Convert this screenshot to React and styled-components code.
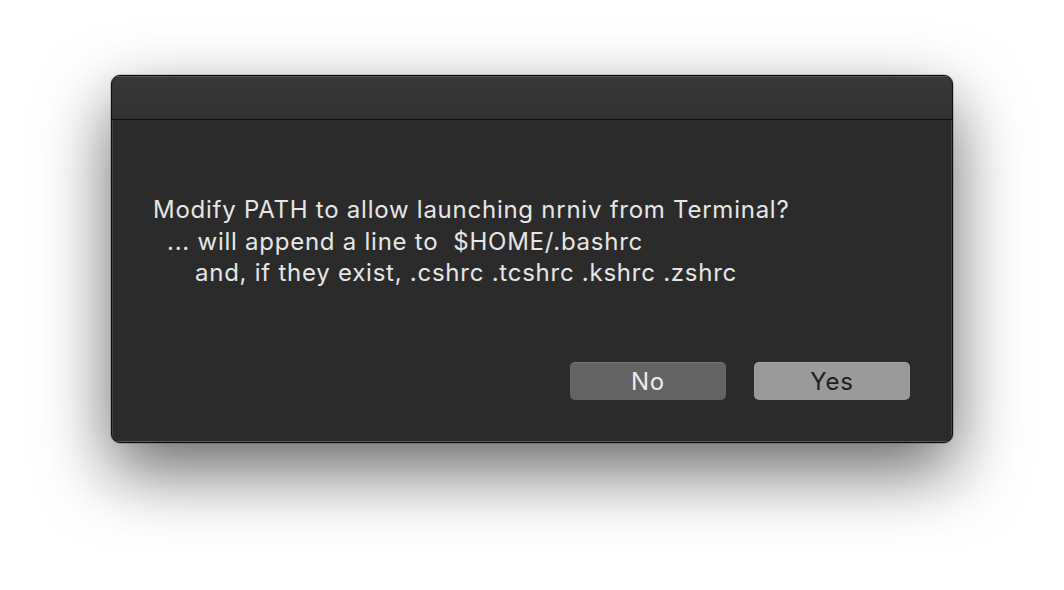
import React from "react";
import styled, { createGlobalStyle } from "styled-components";

const GlobalStyle = createGlobalStyle`
  html, body {
    margin: 0;
    padding: 0;
    background: #ffffff;
  }
  body {
    font-family: Inter, "Liberation Sans", Arial, sans-serif;
  }
`;

const Stage = styled.div`
  width: 1064px;
  height: 590px;
  display: flex;
  justify-content: center;
  align-items: flex-start;
  padding-top: 75px;
  box-sizing: border-box;
  overflow: hidden;
  background: #ffffff;
`;

const Window = styled.div`
  width: 842px;
  height: 368px;
  box-sizing: border-box;
  display: flex;
  flex-direction: column;
  border: 1px solid #0c0c0c;
  border-radius: 9px;
  overflow: hidden;
  background: #2b2b2b;
  box-shadow: 0 28px 70px rgba(0, 0, 0, 0.6), 0 0 0 1px rgba(0, 0, 0, 0.15);
`;

const TitleBar = styled.div`
  height: 43px;
  flex: none;
  background: linear-gradient(#383838, #323232);
  border-bottom: 1px solid #101010;
  box-shadow: inset 0 1px 0 rgba(255, 255, 255, 0.16);
`;

const Body = styled.div`
  flex: 1;
  display: flex;
  flex-direction: column;
  padding: 74px 42px 42px 41px;
  box-shadow: inset 1px 0 0 rgba(255, 255, 255, 0.12),
    inset -1px 0 0 rgba(255, 255, 255, 0.12),
    inset 0 -1px 0 rgba(255, 255, 255, 0.22);
`;

const Message = styled.div`
  color: #e6e6e6;
  font-size: 24px;
  letter-spacing: 0.75px;
  line-height: 31.5px;
  white-space: pre;
`;

const Line = styled.div`
  padding-left: ${(p) => p.indent || 0}px;
`;

const Actions = styled.div`
  margin-top: auto;
  display: flex;
  justify-content: flex-end;
  gap: 28px;
`;

const Button = styled.button`
  width: 156px;
  height: 38px;
  border: none;
  border-radius: 5px;
  font-family: inherit;
  font-size: 24px;
  letter-spacing: 0.8px;
  padding: 0;
  background: ${(p) => (p.primary ? "#9a9a9a" : "#636363")};
  color: ${(p) => (p.primary ? "#202020" : "#ececec")};
  box-shadow: inset 0 1px 0 rgba(255, 255, 255, 0.12);
`;

const App = () => {
  return (
    <>
      <GlobalStyle />
      <Stage>
        <Window>
          <TitleBar />
          <Body>
            <Message>
              <Line>Modify PATH to allow launching nrniv from Terminal?</Line>
              <Line indent={14}>... will append a line to  $HOME/.bashrc</Line>
              <Line indent={42}>and, if they exist, .cshrc .tcshrc .kshrc .zshrc</Line>
            </Message>
            <Actions>
              <Button>No</Button>
              <Button primary>Yes</Button>
            </Actions>
          </Body>
        </Window>
      </Stage>
    </>
  );
};

export default App;
